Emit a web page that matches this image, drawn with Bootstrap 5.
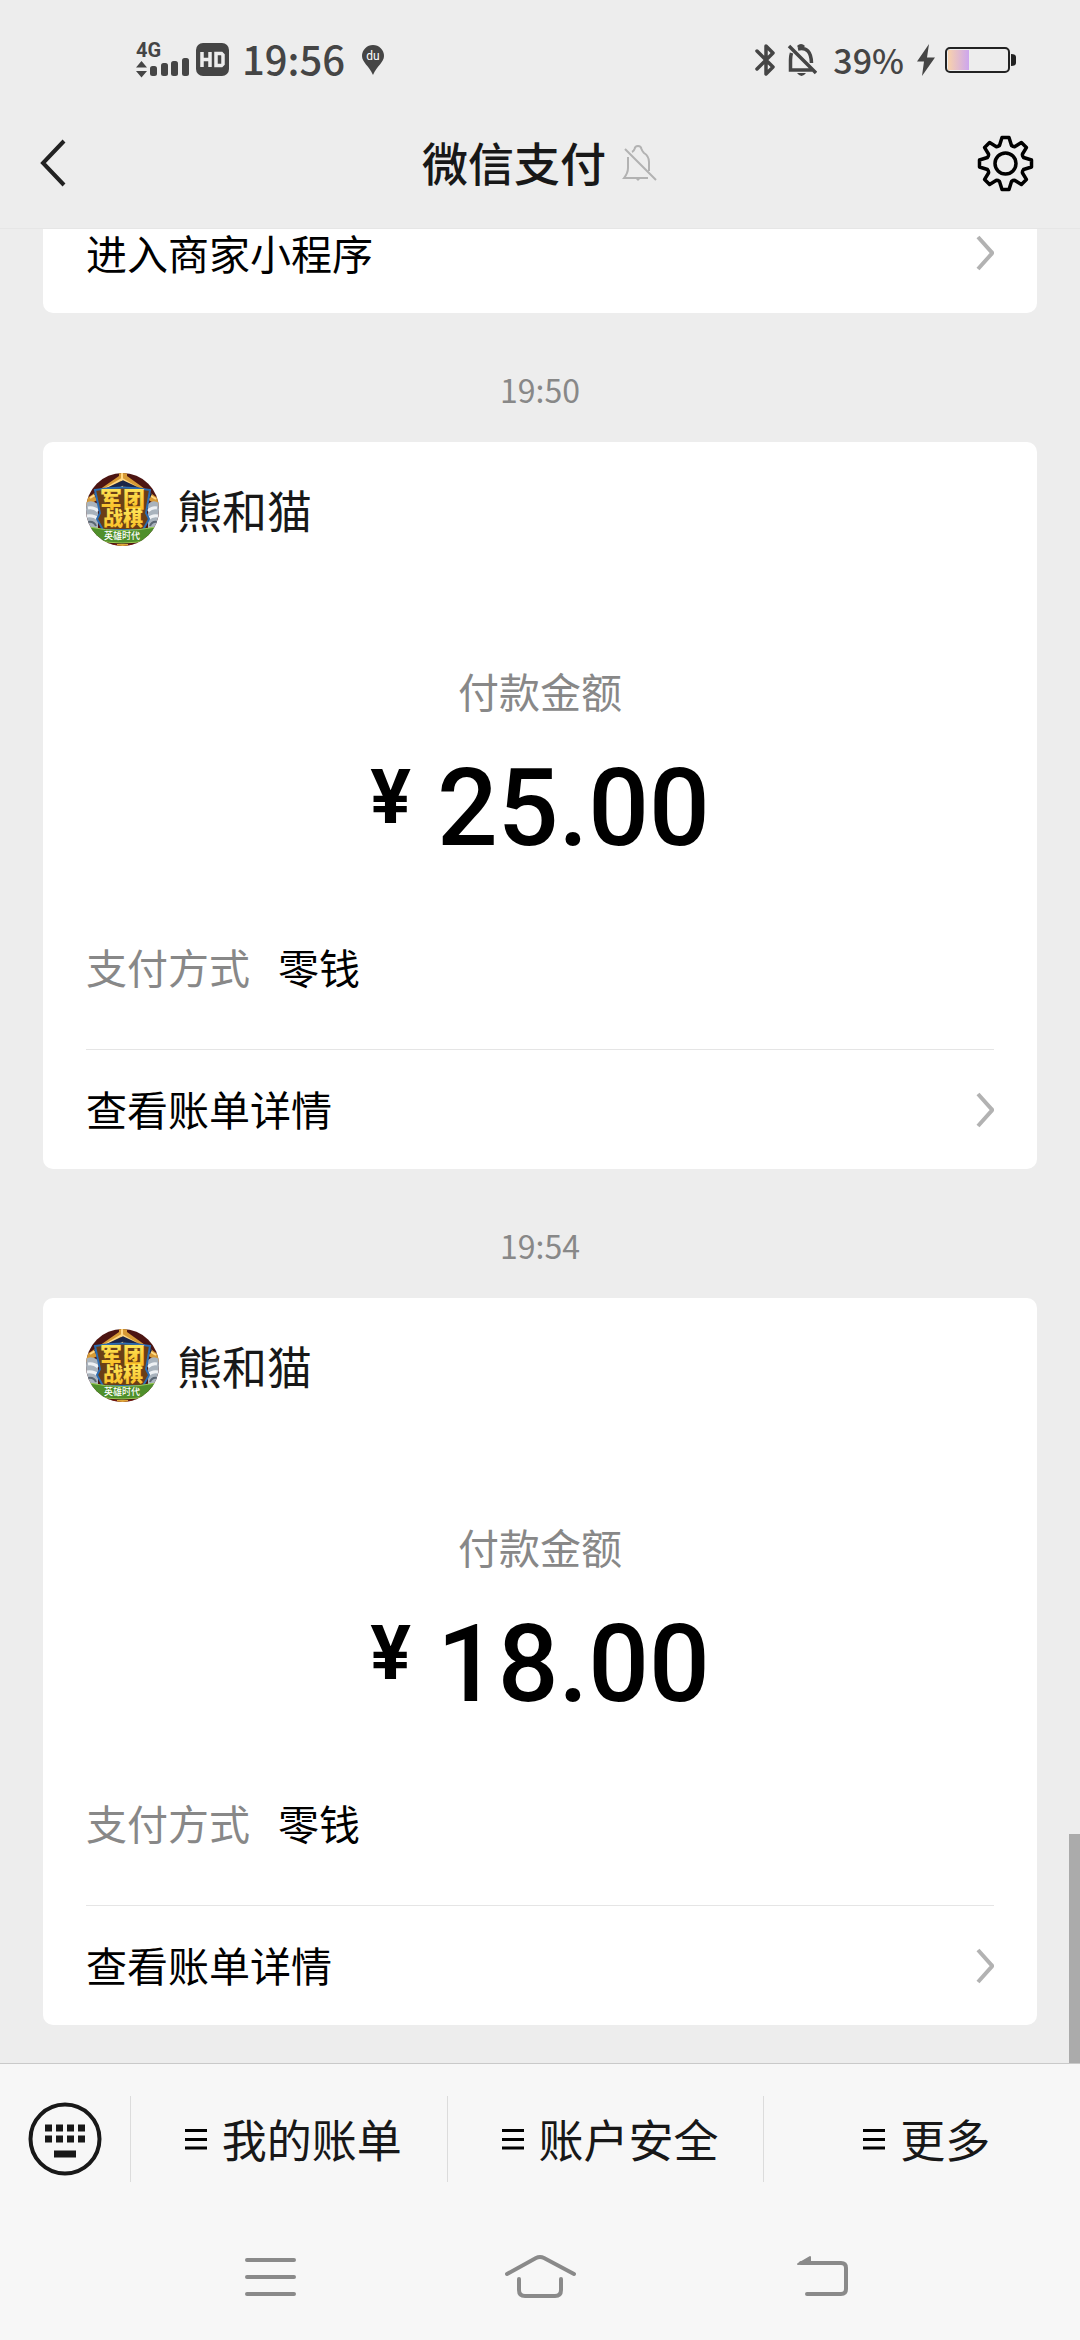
<!DOCTYPE html>
<html lang="zh-CN">
<head>
<meta charset="utf-8">
<meta name="viewport" content="width=device-width, initial-scale=1">
<title>微信支付</title>
<link rel="stylesheet" href="https://cdn.jsdelivr.net/npm/bootstrap@5.3.0/dist/css/bootstrap.min.css">
<style>
body{background:#ededed;color:#000;font-family:"Noto Sans CJK SC",sans-serif;font-size:41px;line-height:58px}
svg{display:block;flex:none}
.btn-plain{background:none;border:0;padding:0;color:inherit;line-height:inherit}
.status{height:98px;padding:22px 64px 0 136px;color:#454545}
.status-row{height:76px}
.clock{font-size:40px;font-weight:500}
.percent{font-size:34px;font-weight:500}
.titlebar{height:131px;padding:0 46px 0 40px;color:#181818;border-bottom:1px solid #e6e6e6}
.titlebar h1{font-size:46px;line-height:60px;font-weight:500;padding-bottom:4px}
.back{width:63px}
.chat{padding:0 43px 38px}
.bubble{background:#fff;border-radius:10px;padding:0 43px}
.bubble-cut{border-radius:0 0 10px 10px}
.bubble-cut .entry{height:84px;padding-bottom:36px}
.stamp{height:129px;padding-top:22px;font-size:32px;color:#888}
.entry{height:119px;color:#000;text-decoration:none}
.entry span{padding-bottom:3px}
.payee{padding-top:31px;font-size:45px;color:#181818;gap:18px}
.caption{color:#888}
.total-label{margin-top:115px}
.total{margin-top:36px;gap:26px;font-family:Roboto,sans-serif;font-weight:500;font-size:107px;line-height:108px}
.total .yen{font-size:76px;line-height:84px;font-weight:700}
.method{margin:74px 0 54px;gap:28px}
.method dt,.method dd{font-weight:400;margin:0}
.rule{border-top:1px solid #e5e5e5}
.thumb{width:11px;height:229px;background:#ababab}
.dock{background:#f7f7f7;border-top:1px solid #c9c9c9;color:#181818}
.menus{height:150px;font-size:45px}
.kb{width:130px}
.menu-item{border-left:1px solid #dcdcdc!important;height:86px;gap:15px;padding-left:9px;flex:1 1 0}
.sysnav{height:126px;padding:0 135px}
</style>
<script src="https://cdn.jsdelivr.net/npm/bootstrap@5.3.0/dist/js/bootstrap.bundle.min.js"></script>
</head>
<body>
<svg width="0" height="0" class="position-absolute" aria-hidden="true">
<defs>
<clipPath id="round"><circle cx="36.5" cy="36.5" r="36.5"/></clipPath>
<linearGradient id="gold" x1="0" y1="0" x2="0" y2="1"><stop offset="0" stop-color="#fff36a"/><stop offset="1" stop-color="#f9b81c"/></linearGradient>
<linearGradient id="charge"><stop offset="0" stop-color="#f8d2ac"/><stop offset="1" stop-color="#cda6ee"/></linearGradient>
<symbol id="arrow" viewBox="0 0 18 36"><path d="M2 2L15.500 17Q16.500 18 15.500 19L2 34" fill="none" stroke="#b2b2b2" stroke-width="4"/></symbol>
<symbol id="lines" viewBox="0 0 22 22"><path d="M0 2.500H22M0 11.500H22M0 20H22" stroke="#000" stroke-width="3"/></symbol>
<symbol id="logo" viewBox="0 0 73 73">
<g clip-path="url(#round)">
<rect width="73" height="73" fill="#4c1512"/>
<path d="M0 26L33 3V0H41V3L73 26V33L38 13L0 33Z" fill="#d79a35"/>
<path d="M4 25L36 6L70 26M36 0V14" fill="none" stroke="#ffd985" stroke-width="2"/>
<path d="M9 23L37 10L65 23" fill="none" stroke="#1b2547" stroke-width="5"/>
<path d="M0 30Q5 26 12 31V57H0ZM73 30Q67 26 62 31V57H73Z" fill="#a9b3bd"/>
<path d="M2 35Q8 34 12 38M1 43Q8 42 12 46M71 35Q66 34 62 38M72 43Q66 42 62 46" fill="none" stroke="#eef1f4" stroke-width="3"/>
<path d="M2 49Q8 48 10 53M71 49Q66 48 64 53" fill="none" stroke="#5a6672" stroke-width="2"/>
<path d="M9 17Q37 12 64 17L60 40L63 46L57 57H17L11 46L14 40Z" fill="#6b3f16" stroke="#2b6cb2" stroke-width="2"/>
<text x="14 37" y="34" font-size="22" font-weight="900" fill="url(#gold)">军团</text>
<text x="17 37" y="53" font-size="20" font-weight="900" fill="url(#gold)">战棋</text>
<path d="M3 54Q36 61 70 54L64 67Q36 73 9 67Z" fill="#4f8f2b" stroke="#9acb52" stroke-width="1"/>
<path d="M14 69Q36 74 60 69L52 73H20Z" fill="#7d1a12"/><path d="M31 71H42V73H31Z" fill="#e0a83c"/>
<text x="36" y="66" text-anchor="middle" font-size="9" font-weight="500" fill="#fff">英雄时代</text>
</g>
</symbol>
</defs>
</svg>
<div class="d-flex flex-column min-vh-100">
<header>
<div class="status">
<div class="status-row d-flex align-items-center justify-content-between">
<div class="d-flex align-items-center">
<svg width="94" height="52" viewBox="0 -6 94 52" aria-label="4G HD">
<g fill="#454545"><text x="0" y="17" font-size="20" font-weight="700" font-family="Roboto,sans-serif">4G</text>
<path d="M0 27.500L5.500 21L11 27.500ZM0 31L5.500 37.500L11 31Z"/>
<rect x="14" y="26" width="7" height="10" rx="2.500"/><rect x="25" y="23" width="7" height="13" rx="2.500"/><rect x="35" y="21" width="7" height="15" rx="2.500"/><rect x="46" y="18" width="7" height="18" rx="2.500"/>
<rect x="60" y="3" width="33" height="33" rx="7"/></g>
<path d="M66 12V27M74 12V27M66 19.500H74M80 13.500H85.500L87 15V24L85.500 25.500H80Z" fill="none" stroke="#ededed" stroke-width="3.500"/>
</svg>
<span class="clock ms-2 ps-1 pb-1">19:56</span>
<svg class="ms-3" width="24" height="32" viewBox="0 0 24 32"><path d="M12 1A11 11 0 0 1 23 12C23 18 16 22 12 31C8 22 1 18 1 12A11 11 0 0 1 12 1Z" fill="#454545"/><text x="12" y="16" text-anchor="middle" font-size="12" fill="#fff" font-family="Roboto,sans-serif">du</text></svg>
</div>
<div class="d-flex align-items-center">
<svg width="20" height="34" viewBox="0 0 20 34"><path d="M2 8L18 24L11 31V3L18 10L2 26" fill="none" stroke="#454545" stroke-width="3.500" stroke-linejoin="round" stroke-linecap="round"/></svg>
<svg class="ms-2 me-3" width="34" height="34" viewBox="-4 0 34 34"><g fill="none" stroke="#454545" stroke-width="3.500"><path d="M2 3L29 30M4.500 10Q3.500 13 3.500 17V27H25M11 6Q24 3 24.500 20"/><path d="M11 4Q14 1 17 4" stroke-width="3"/></g><path d="M10 30H19Q14.500 36 10 30Z" fill="#454545"/></svg>
<span class="percent pe-1">39%</span>
<svg class="ms-2" width="20" height="34" viewBox="0 0 20 34"><path d="M13 1L1 18.500H8L6 33L19 14.500H11Z" fill="#454545"/></svg>
<svg class="ms-2" width="72" height="28" viewBox="0 0 72 28"><rect x="4" y="4" width="21" height="20" fill="url(#charge)"/><rect x="2" y="2" width="63" height="24" rx="4" fill="none" stroke="#222" stroke-width="2"/><path d="M67 8Q72 8 72 11V17Q72 20 67 20Z" fill="#222"/></svg>
</div>
</div>
</div>
<div class="titlebar d-flex align-items-center justify-content-between">
<button class="btn-plain back" type="button" aria-label="返回"><svg width="26" height="48" viewBox="0 0 26 48"><path d="M24 2L3 24L24 46" fill="none" stroke="#222" stroke-width="4"/></svg></button>
<div class="d-flex align-items-center">
<h1 class="m-0">微信支付</h1>
<svg class="ms-3" width="36" height="38" viewBox="0 0 36 38"><g fill="none" stroke="#b2b2b2" stroke-width="2"><path d="M3 5L34 36M6 13V24Q6 29 2 34H26M10 8Q12 7 12.500 5Q13 2 16 2Q19 2 19.500 5Q20 7 22 9Q27 12 27 18V27"/></g><path d="M13 34H19L16 37Z" fill="#b2b2b2"/></svg>
</div>
<button class="btn-plain" type="button" aria-label="设置"><svg width="57" height="57" viewBox="-28.500 -28.500 57 57"><g fill="none" stroke="#000" stroke-width="3.500" stroke-linejoin="round"><circle r="10.500"/><path d="M-3.500 -26H3.500L6 -18Q8 -16.500 9.500 -17L15.900 -20.900L20.900 -15.900L17 -9.500Q16.500 -8 18 -6L26 -3.500V3.500L18 6Q16.500 8 17 9.500L20.900 15.900L15.900 20.900L9.500 17Q8 16.500 6 18L3.500 26H-3.500L-6 18Q-8 16.500 -9.500 17L-15.900 20.900L-20.900 15.900L-17 9.500Q-16.500 8 -18 6L-26 3.500V-3.500L-18 -6Q-16.500 -8 -17 -9.500L-20.900 -15.900L-15.900 -20.900L-9.500 -17Q-8 -16.500 -6 -18Z"/></g></svg></button>
</div>
</header>

<main class="chat flex-grow-1 position-relative">
<section class="bubble bubble-cut">
<a class="entry d-flex align-items-center justify-content-between" href="#"><span>进入商家小程序</span><svg width="18" height="36"><use href="#arrow"/></svg></a>
</section>

<div class="stamp d-flex align-items-center justify-content-center">19:50</div>
<section class="bubble">
<div class="payee d-flex align-items-center"><svg width="73" height="73"><use href="#logo"/></svg>熊和猫</div>
<div class="caption total-label text-center">付款金额</div>
<div class="total d-flex justify-content-center align-items-start"><span class="yen">¥</span><span>25.00</span></div>
<dl class="method d-flex"><dt class="caption">支付方式</dt><dd>零钱</dd></dl>
<div class="rule"></div>
<a class="entry d-flex align-items-center justify-content-between" href="#"><span>查看账单详情</span><svg width="18" height="36"><use href="#arrow"/></svg></a>
</section>

<div class="stamp d-flex align-items-center justify-content-center">19:54</div>
<section class="bubble">
<div class="payee d-flex align-items-center"><svg width="73" height="73"><use href="#logo"/></svg>熊和猫</div>
<div class="caption total-label text-center">付款金额</div>
<div class="total d-flex justify-content-center align-items-start"><span class="yen">¥</span><span>18.00</span></div>
<dl class="method d-flex"><dt class="caption">支付方式</dt><dd>零钱</dd></dl>
<div class="rule"></div>
<a class="entry d-flex align-items-center justify-content-between" href="#"><span>查看账单详情</span><svg width="18" height="36"><use href="#arrow"/></svg></a>
</section>
<div class="thumb position-absolute bottom-0 end-0"></div>
</main>

<footer class="dock">
<div class="menus d-flex align-items-center">
<button class="btn-plain kb d-flex justify-content-center" type="button" aria-label="键盘"><svg width="74" height="74" viewBox="0 0 74 74"><circle cx="37" cy="37" r="34.500" fill="none" stroke="#181818" stroke-width="4"/><path d="M17 26H57M17 37H57" stroke="#181818" stroke-width="7" stroke-dasharray="7 4"/><path d="M26 52H48" stroke="#181818" stroke-width="7"/></svg></button>
<button class="btn-plain menu-item d-flex align-items-center justify-content-center" type="button"><svg width="22" height="22"><use href="#lines"/></svg>我的账单</button>
<button class="btn-plain menu-item d-flex align-items-center justify-content-center" type="button"><svg width="22" height="22"><use href="#lines"/></svg>账户安全</button>
<button class="btn-plain menu-item d-flex align-items-center justify-content-center" type="button"><svg width="22" height="22"><use href="#lines"/></svg>更多</button>
</div>
<nav class="sysnav d-flex align-items-center" aria-label="系统导航">
<button class="btn-plain flex-fill d-flex justify-content-center" type="button" aria-label="最近任务"><svg width="78" height="46" viewBox="0 0 78 46"><path d="M16 6H63M16 23H63M16 40H63" stroke="#8a8a8a" stroke-width="4" stroke-linecap="round"/></svg></button>
<button class="btn-plain flex-fill d-flex justify-content-center" type="button" aria-label="主屏幕"><svg width="78" height="46" viewBox="0 0 78 46"><path d="M6 20L35 4Q39 2 43 4L73 20M18 25V36Q18 42 24 42H54Q60 42 60 36V25" fill="none" stroke="#8a8a8a" stroke-width="4" stroke-linecap="round"/></svg></button>
<button class="btn-plain flex-fill d-flex justify-content-center" type="button" aria-label="返回上一页"><svg width="78" height="46" viewBox="0 0 78 46"><path d="M30 9H70Q75 9 75 14V35Q75 40 70 40H36" fill="none" stroke="#8a8a8a" stroke-width="4" stroke-linecap="round"/><path d="M27 10L39 3V9Z" fill="#8a8a8a" stroke="#8a8a8a" stroke-width="2" stroke-linejoin="round"/></svg></button>
</nav>
</footer>
</div>
</body>
</html>
